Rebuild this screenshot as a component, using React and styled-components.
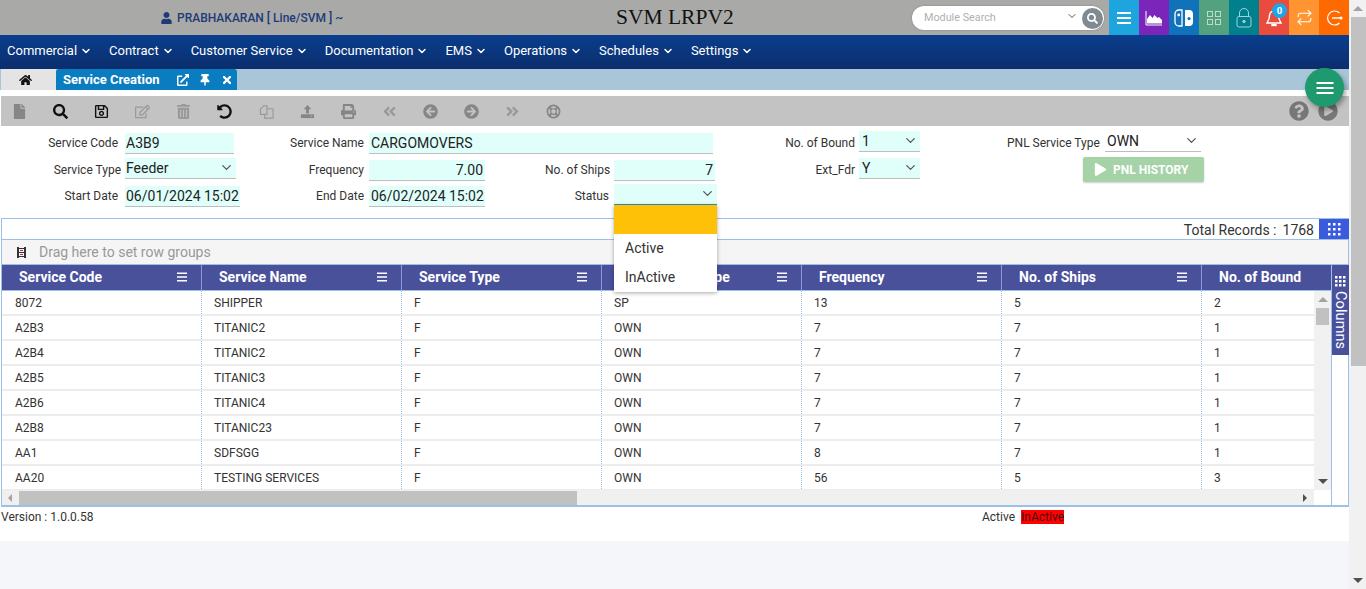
import React from 'react';
import styled, { createGlobalStyle } from 'styled-components';
import {
  FaUser, FaHome, FaExternalLinkAlt, FaThumbtack, FaTimes, FaFile, FaSearch, FaRegSave, FaRegEdit, FaTrashAlt,
  FaUndoAlt, FaPrint, FaAngleDoubleLeft, FaAngleDoubleRight, FaArrowCircleLeft, FaArrowCircleRight,
  FaQuestionCircle, FaPlayCircle, FaPlay
} from 'react-icons/fa';
import { ChevronDown, Repeat } from 'lucide-react';

const Global = createGlobalStyle`
  html, body { margin: 0; padding: 0; background: #fff; height: 589px; overflow: hidden; }
  * { box-sizing: border-box; }
  body { font-family: Roboto, "Liberation Sans", sans-serif; color: #333; }
`;

const Viewport = styled.div`display: flex; width: 1366px; height: 589px; overflow: hidden;`;
const Page = styled.div`position: relative; width: 1349px; height: 589px; background: #f5f6fa; display: flex; flex-direction: column;`;
const Sheet = styled.div`background: #fff; height: 541px; display: flex; flex-direction: column;`;

const PageScroll = styled.div`width: 17px; background: #f1f1f1; display: flex; flex-direction: column; align-items: center; position: relative;`;
const ScrollArrow = styled.div`
  width: 0; height: 0; border-left: 5px solid transparent; border-right: 5px solid transparent; margin: 6px 0;
  ${p => p.$dir === 'up' ? 'border-bottom: 5px solid #a3a3a3;' : 'border-top: 5px solid #505050;'}
`;
const PageThumb = styled.div`width: 15px; align-self: flex-end; height: 349px; background: #c1c1c1; margin-bottom: auto;`;

const Header = styled.header`height: 35px; background: #a9aaa7; display: flex; align-items: center; position: relative;`;
const User = styled.div`display: flex; align-items: center; gap: 5px; margin-left: 161px; width: 454px; color: #203a78; font-size: 12px; font-weight: 500; svg { width: 11px; height: 12px; }`;
const Title = styled.div`width: 297px; padding-left: 1px; font-family: "Liberation Serif", serif; font-size: 21.5px; color: #111; white-space: nowrap;`;
const Search = styled.div`width: 192px; height: 24px; border-radius: 12px; background: #fff; display: flex; align-items: center; padding-left: 12px; box-shadow: 0 0 2px rgba(0,0,0,.25); font-size: 10.8px; color: #b0b0b0; position: relative;`;
const SearchChevron = styled(ChevronDown)`position: absolute; right: 26px; top: 4px; width: 12px; height: 12px; color: #555;`;
const SearchBtn = styled.div`position: absolute; right: 1px; top: 2px; width: 21px; height: 21px; border-radius: 50%; background: #808a93; color: #fff; display: flex; align-items: center; justify-content: center; svg { width: 11px; height: 11px; }`;
const Tiles = styled.div`display: flex; margin-left: 5px;`;
const Tile = styled.div`width: 30px; height: 35px; background: ${p => p.$bg}; color: #fff; display: flex; align-items: center; justify-content: center; position: relative;`;
const Badge = styled.span`position: absolute; top: 3px; left: 13px; width: 15px; height: 15px; border-radius: 50%; background: #1fa5e6; color: #fff; font-size: 9.5px; font-weight: 700; display: flex; align-items: center; justify-content: center;`;

const Nav = styled.nav`height: 34px; background: linear-gradient(#0a3e8d, #0b2d6d); display: flex; align-items: center; padding-left: 7px; gap: 17px;`;
const NavItem = styled.div`display: flex; align-items: center; gap: 3px; color: #fff; font-size: 13px; white-space: nowrap; padding-bottom: 4px; svg { width: 12px; height: 12px; margin-top: 2px; stroke-width: 3; }`;

const TabBar = styled.div`height: 21px; background: #a9c6d8; display: flex; padding-left: 1px; margin-bottom: 6px;`;
const HomeTab = styled.div`width: 55px; background: #e4e4e4; padding-right: 6px; display: flex; align-items: center; justify-content: center; color: #111; svg { width: 13px; height: 12px; }`;
const ActiveTab = styled.div`width: 181px; background: #0a7cc0; border-radius: 3px 3px 0 0; color: #fff; font-size: 13px; font-weight: 700; display: flex; align-items: center; padding-left: 7px; gap: 10px; span { width: 104px; white-space: nowrap; } svg { width: 12px; height: 12px; }`;

const Toolbar = styled.div`height: 30px; background: #c3c3c3; margin-left: 1px; display: flex; align-items: center; gap: 4.1px; position: relative;`;
const Tool = styled.div`width: 37px; height: 30px; display: flex; align-items: center; justify-content: center; color: ${p => p.$on ? '#111' : p.$soft ? '#999' : '#868686'}; svg { width: 15px; height: 15px; }`;
const ToolRight = styled.div`margin-left: auto; display: flex; gap: 9px; padding-right: 11px; color: #777; svg { width: 20px; height: 20px; display: block; }`;

const Form = styled.div`
  height: 92px; padding-top: 7px; display: grid;
  grid-template-columns: 125px 165px 79px 176px 69px 171px 74px 148px 98px 244px;
  grid-template-rows: 26.5px 26.5px 24px;
  font-size: 12px; color: #333;
`;
const Label = styled.div`text-align: right; padding-right: ${p => p.$pad ?? 7}px; line-height: 20px; white-space: nowrap;`;
const Field = styled.div`
  width: ${p => p.$w}px; height: 21px; background: ${p => p.$plain ? '#fff' : '#e0fffa'}; border-bottom: 1px solid ${p => p.$focus ? '#2196c9' : '#bdbdbd'};
  font-size: 14px; color: #222; padding: 0 2px 0 ${p => p.$pl ?? 2}px; line-height: 20px;
  display: flex; align-items: center; justify-content: ${p => p.$right ? 'flex-end' : 'space-between'};
  white-space: nowrap; margin-top: ${p => p.$top || 0}px; position: relative;
  ${p => p.$span ? `grid-column: ${p.$span};` : ''}
  svg { width: 15px; height: 15px; color: #555; flex: none; margin-top: -1px; }
`;
const HistoryBtn = styled.div`grid-column: 9 / 11; grid-row: 2; margin: -2.5px 0 0 76px; width: 121px; height: 25px; border-radius: 2px; background: #a5d2a6; box-shadow: 0 1px 2px rgba(0,0,0,.2); color: #fff; font-size: 12px; font-weight: 700; display: flex; align-items: center; padding-left: 11px; gap: 6px; svg { width: 13px; height: 13px; }`;
const Empty = styled.div``;

const Dropdown = styled.div`position: absolute; left: 614px; top: 205px; width: 103px; background: #fff; box-shadow: 0 1px 4px rgba(0,0,0,.35); z-index: 5; font-size: 14px; color: #333;`;
const Option = styled.div`height: 29px; line-height: 29px; padding-left: 11px; background: ${p => p.$sel ? '#ffc107' : '#fff'};`;

const Fab = styled.div`position: absolute; left: 1305px; top: 68px; width: 39px; height: 39px; border-radius: 50%; background: #1f9a6e; box-shadow: 2px 3px 5px rgba(0,0,0,.35); color: #fff; display: flex; align-items: center; justify-content: center; z-index: 6;`;

const GridPanel = styled.div`margin-left: 1px; width: 1348px; height: 289px; border: 1px solid #9dc0e8; border-bottom-width: 2px; display: flex; flex-direction: column;`;
const GridTop = styled.div`height: 21px; flex: none; display: flex; justify-content: flex-end; align-items: center; font-size: 14px; color: #333; border-bottom: 1px solid #9dc0e8; gap: 6px; margin-right: -1px;`;
const Total = styled.span`white-space: nowrap; padding-top: 2px;`;
const GridBtn = styled.div`width: 30px; height: 20px; margin-left: -1px; background: #3a5bdc; color: #fff; display: flex; align-items: center; justify-content: center;`;
const Dots = ({ n = 3, s = 3, g = 2 }) => (
  <svg width={n * s + (n - 1) * g} height={n * s + (n - 1) * g}>
    {Array.from({ length: n * n }).map((_, i) => (
      <rect key={i} x={(i % n) * (s + g)} y={Math.floor(i / n) * (s + g)} width={s - .5} height={s - .5} fill="#fff" />
    ))}
  </svg>
);
const GroupBar = styled.div`height: 25px; flex: none; background: #f5f5f5; border-bottom: 1px solid #9dc0e8; display: flex; align-items: center; padding-left: 14px; gap: 12px; color: #999; font-size: 14px; svg { flex: none; }`;
const GridBody = styled.div`flex: 1; display: flex; min-height: 0; position: relative;`;
const GridMain = styled.div`width: 1329px; display: flex; flex-direction: column;`;
const HeadRow = styled.div`height: 26px; flex: none; background: #4a519b; display: flex; border-bottom: 1px solid #9dc0e8;`;
const HeadCell = styled.div`width: ${p => p.$w || 200}px; flex: none; border-right: 1px solid #8d9ad6; padding: 0 13px 2px 17px; color: #fff; font-size: 14px; font-weight: 700; display: flex; align-items: center; justify-content: space-between; white-space: nowrap; &:last-child { border-right: 0; } svg { width: 12px; height: 12px; }`;
const RowsWrap = styled.div`height: 199px; flex: none; display: flex;`;
const Rows = styled.div`width: 1312px; overflow: hidden;`;
const Row = styled.div`height: 25px; display: flex; border-bottom: 2px solid #ececec;`;
const Cell = styled.div`width: ${p => p.$w || 200}px; flex: none; padding-left: 12px; border-right: 1px dotted #9dc0e8; font-size: 12px; color: #333; line-height: 25px; white-space: nowrap; &:first-child { padding-left: 13px; } &:last-child { border-right: 0; }`;
const VScroll = styled.div`width: 17px; background: #f1f1f1; display: flex; flex-direction: column; align-items: center; position: relative;`;
const VThumb = styled.div`width: 13px; height: 17px; background: #c1c1c1; margin-bottom: auto;`;
const HScroll = styled.div`height: 15px; flex: none; display: flex; align-items: center; background: #f0f0f0; width: 1312px; padding: 0 7px 0 6px;`;
const HThumb = styled.div`width: 558px; height: 14px; background: #c1c1c1; margin-left: 7px; margin-right: auto;`;
const HArrow = styled.div`width: 0; height: 0; border-top: 4px solid transparent; border-bottom: 4px solid transparent; ${p => p.$dir === 'l' ? 'border-right: 4px solid #a3a3a3;' : 'border-left: 4px solid #505050;'}`;
const ColumnsTab = styled.div`width: 18px; border-left: 1px solid #9dc0e8; display: flex; flex-direction: column;`;
const ColumnsFace = styled.div`height: 90px; width: 17px; background: #4a519b; color: #fff; display: flex; flex-direction: column; align-items: center; padding-top: 11px; gap: 4px;`;
const ColumnsText = styled.span`writing-mode: vertical-rl; font-size: 14.5px; line-height: 15px; letter-spacing: .1px;`;

const Footer = styled.div`height: 34px; position: relative; font-size: 12px; color: #333; display: flex; padding: 3px 0 0 1px; line-height: 14px;`;
const Version = styled.div`width: 981px;`;
const Legend = styled.div`display: flex; gap: 6px;`;
const Red = styled.span`background: #ff0000; color: #4a0f0f; height: 14px; width: 43px; white-space: nowrap; overflow: hidden;`;

const heads = ['Service Code', 'Service Name', 'Service Type', 'PNL Service Type', 'Frequency', 'No. of Ships', 'No. of Bound'];
const rows = [
  ['8072', 'SHIPPER', 'F', 'SP', '13', '5', '2'],
  ['A2B3', 'TITANIC2', 'F', 'OWN', '7', '7', '1'],
  ['A2B4', 'TITANIC2', 'F', 'OWN', '7', '7', '1'],
  ['A2B5', 'TITANIC3', 'F', 'OWN', '7', '7', '1'],
  ['A2B6', 'TITANIC4', 'F', 'OWN', '7', '7', '1'],
  ['A2B8', 'TITANIC23', 'F', 'OWN', '7', '7', '1'],
  ['AA1', 'SDFSGG', 'F', 'OWN', '8', '7', '1'],
  ['AA20', 'TESTING SERVICES', 'F', 'OWN', '56', '5', '3'],
];
const navs = ['Commercial', 'Contract', 'Customer Service', 'Documentation', 'EMS', 'Operations', 'Schedules', 'Settings'];

const Hamburger = ({ size = 18, w = 14 }) => (
  <svg width={size} height={size} viewBox={`0 0 ${size} ${size}`}>
    {[-5, 0, 5].map(d => <rect key={d} x={(size - w) / 2} y={size / 2 - 1 + d} width={w} height="2" fill="currentColor" />)}
  </svg>
);
const ChartIcon = () => (
  <svg width="18" height="16" viewBox="0 0 18 16"><path d="M1 1v14h16" fill="none" stroke="#fff" strokeWidth="1"/><path d="M2 13.500V9l3-4 2.500 3 2-3 3 3 1.500-1 3 3v3.500z" fill="#fff"/></svg>
);
const SwitchIcon = () => (
  <svg width="20" height="18" viewBox="0 0 20 18"><path d="M8 1H5a4 4 0 0 0-4 4v8a4 4 0 0 0 4 4h3z" fill="none" stroke="#fff" strokeWidth="1.300"/><path d="M11 1h4a4 4 0 0 1 4 4v8a4 4 0 0 1-4 4h-4z" fill="#fff"/><circle cx="4.700" cy="6" r="1.400" fill="#fff"/><circle cx="15" cy="9.600" r="1.600" fill="#0f72bb"/></svg>
);
const GridIcon = () => (
  <svg width="16" height="16" viewBox="0 0 16 16" fill="none" stroke="#b9dccb" strokeWidth="1"><rect x="1.500" y="1.500" width="5" height="5"/><rect x="9.500" y="1.500" width="5" height="5"/><rect x="1.500" y="9.500" width="5" height="5"/><rect x="9.500" y="9.500" width="5" height="5"/></svg>
);
const LockIcon = () => (
  <svg width="16" height="20" viewBox="0 0 16 20" fill="none" stroke="#9fd3d8" strokeWidth="1"><rect x="1" y="8.500" width="14" height="10.500" rx="2"/><path d="M3.500 8.500V5a4.500 4.500 0 0 1 9 0v3.500"/><circle cx="8" cy="13.500" r="1.200" fill="#9fd3d8"/></svg>
);
const BellIcon = () => (
  <svg width="16" height="18" viewBox="0 0 16 18" fill="none" stroke="#fff" strokeWidth="1.400"><path d="M8 2a4.500 4.500 0 0 0-4.500 4.500c0 4-1.500 6-2.500 7.500h14c-1-1.500-2.500-3.500-2.500-7.500A4.500 4.500 0 0 0 8 2z"/><path d="M6 15.500h4v1H6z"/></svg>
);
const ExitIcon = () => (
  <svg width="18" height="18" viewBox="0 0 18 18" fill="none" stroke="#fff" strokeWidth="1.200"><path d="M14.500 4a7 7 0 1 0 0 10"/><path d="M7 9h10" strokeWidth="1.400"/><circle cx="16" cy="9" r="1" fill="#fff"/></svg>
);
const UploadIcon = () => (
  <svg viewBox="0 0 16 16"><path d="M8 1l4 4.500H9.500V10h-3V5.500H4z" fill="currentColor"/><path d="M1 11h14v4H1z" fill="currentColor"/><rect x="11.500" y="12.500" width="1.500" height="1" fill="#c3c3c3"/></svg>
);
const CopyIcon = () => (
  <svg viewBox="0 0 16 16" fill="none" stroke="currentColor" strokeWidth="1.200"><path d="M1.500 5.500L5 2h3.500v9h-7z"/><path d="M8.500 5H15v10H6v-4"/></svg>
);
const RingIcon = () => (
  <svg viewBox="0 0 16 16" fill="none" stroke="currentColor"><circle cx="8" cy="8" r="6.500" strokeWidth="1.800"/><circle cx="8" cy="8" r="3" strokeWidth="1.200"/><path d="M3.500 3.500l2.400 2.400M12.500 3.500l-2.400 2.400M3.500 12.500l2.400-2.400M12.500 12.500l-2.400-2.400" strokeWidth="2.200"/></svg>
);
const GroupIcon = () => (
  <svg width="11" height="11" viewBox="0 0 11 11"><path d="M1 0h2v11H1zM8 0h2v11H8zM3 1h5v1H3zM3 5h5v1H3zM3 9h5v1H3z" fill="#333"/><path d="M4 3h3v1H4zM4 7h3v1H4z" fill="#a33"/></svg>
);
const LinesIcon = () => (
  <svg viewBox="0 0 12 12"><path d="M1 1.500h10v1.500H1zM1 5.250h10v1.500H1zM1 9h10v1.500H1z" fill="#fff"/></svg>
);

const toolIcons = [
  [FaFile, 'mid'], [FaSearch, 'on'], [FaRegSave, 'on'], [FaRegEdit, 'soft'], [FaTrashAlt, 'soft'], [FaUndoAlt, 'on'],
  [CopyIcon, 'soft'], [UploadIcon, 'mid'], [FaPrint, 'mid'], [FaAngleDoubleLeft, 'soft'], [FaArrowCircleLeft, 'mid'],
  [FaArrowCircleRight, 'mid'], [FaAngleDoubleRight, 'soft'], [RingIcon, 'mid'],
];

export default function App() {
  return (
    <Viewport>
      <Global />
      <Page>
        <Sheet>
          <Header>
            <User><FaUser /> PRABHAKARAN [ Line/SVM ] ~</User>
            <Title>SVM LRPV2</Title>
            <Search>
              Module Search
              <SearchChevron />
              <SearchBtn><FaSearch /></SearchBtn>
            </Search>
            <Tiles>
              <Tile $bg="#1fa5de"><Hamburger /></Tile>
              <Tile $bg="#7c25bb"><ChartIcon /></Tile>
              <Tile $bg="#0f72bb"><SwitchIcon /></Tile>
              <Tile $bg="#53a17f"><GridIcon /></Tile>
              <Tile $bg="#007f8c"><LockIcon /></Tile>
              <Tile $bg="#e94b3c"><BellIcon /><Badge>0</Badge></Tile>
              <Tile $bg="#ff9430"><Repeat size={17} color="#fff" strokeWidth={1.5} /></Tile>
              <Tile $bg="#ff6a00"><ExitIcon /></Tile>
            </Tiles>
          </Header>
          <Nav>
            {navs.map(n => <NavItem key={n}>{n}<ChevronDown /></NavItem>)}
          </Nav>
          <TabBar>
            <HomeTab><FaHome /></HomeTab>
            <ActiveTab>
              <span>Service Creation</span>
              <FaExternalLinkAlt /><FaThumbtack /><FaTimes />
            </ActiveTab>
          </TabBar>
          <Toolbar>
            {toolIcons.map(([I, kind], i) => <Tool key={i} $on={kind === 'on'} $soft={kind === 'soft'}><I /></Tool>)}
            <ToolRight><FaQuestionCircle /><FaPlayCircle /></ToolRight>
          </Toolbar>
          <Form>
            <Label>Service Code</Label>
            <Field $w={109} $pl={1}>A3B9</Field>
            <Label $pad={5}>Service Name</Label>
            <Field $w={344} $span="4 / 7">CARGOMOVERS</Field>
            <Label $pad={4}>No. of Bound</Label>
            <Field $w={61} $top={-2} $pl={3}>1<ChevronDown /></Field>
            <Label $pad={6}>PNL Service Type</Label>
            <Field $w={96} $top={-2} $plain>OWN<ChevronDown /></Field>

            <Label $pad={4}>Service Type</Label>
            <Field $w={111} $top={-2} $pl={1}>Feeder<ChevronDown /></Field>
            <Label $pad={5}>Frequency</Label>
            <Field $w={116} $right>7.00</Field>
            <Label $pad={5}>No. of Ships</Label>
            <Field $w={101} $right>7</Field>
            <Label $pad={4}>Ext_Fdr</Label>
            <Field $w={61} $top={-2} $pl={3}>Y<ChevronDown /></Field>
            <HistoryBtn><FaPlay /> PNL HISTORY</HistoryBtn>

            <Label>Start Date</Label>
            <Field $w={115} $pl={1}>06/01/2024 15:02</Field>
            <Label $pad={5}>End Date</Label>
            <Field $w={116}>06/02/2024 15:02</Field>
            <Label $pad={5}>Status</Label>
            <Field $w={103} $top={-2} $focus><Empty /><ChevronDown /></Field>
          </Form>
          <GridPanel>
            <GridTop>
              <Total>Total Records :</Total>
              <Total>1768</Total>
              <GridBtn><Dots /></GridBtn>
            </GridTop>
            <GroupBar><GroupIcon /> Drag here to set row groups</GroupBar>
            <GridBody>
              <GridMain>
                <HeadRow>
                  {heads.map((h, i) => (
                    <HeadCell key={h} $w={i === 6 ? 129 : 200}>
                      {h}{i < 6 && <LinesIcon />}
                    </HeadCell>
                  ))}
                </HeadRow>
                <RowsWrap>
                  <Rows>
                    {rows.map(r => (
                      <Row key={r[0]}>
                        {r.map((c, i) => <Cell key={i} $w={i === 6 ? 112 : 200}>{c}</Cell>)}
                      </Row>
                    ))}
                  </Rows>
                  <VScroll>
                    <ScrollArrow $dir="up" />
                    <VThumb />
                    <ScrollArrow $dir="down" />
                  </VScroll>
                </RowsWrap>
                <HScroll><HArrow $dir="l" /><HThumb /><HArrow $dir="r" /></HScroll>
              </GridMain>
              <ColumnsTab>
                <ColumnsFace>
                  <Dots s={3} g={1} />
                  <ColumnsText>Columns</ColumnsText>
                </ColumnsFace>
              </ColumnsTab>
            </GridBody>
          </GridPanel>
          <Footer>
            <Version>Version : 1.0.0.58</Version>
            <Legend><span>Active</span><Red>InActive</Red></Legend>
          </Footer>
        </Sheet>
        <Dropdown>
          <Option $sel />
          <Option>Active</Option>
          <Option>InActive</Option>
        </Dropdown>
        <Fab><Hamburger size={22} w={17} /></Fab>
      </Page>
      <PageScroll>
        <ScrollArrow $dir="up" />
        <PageThumb />
        <ScrollArrow $dir="down" />
      </PageScroll>
    </Viewport>
  );
}
